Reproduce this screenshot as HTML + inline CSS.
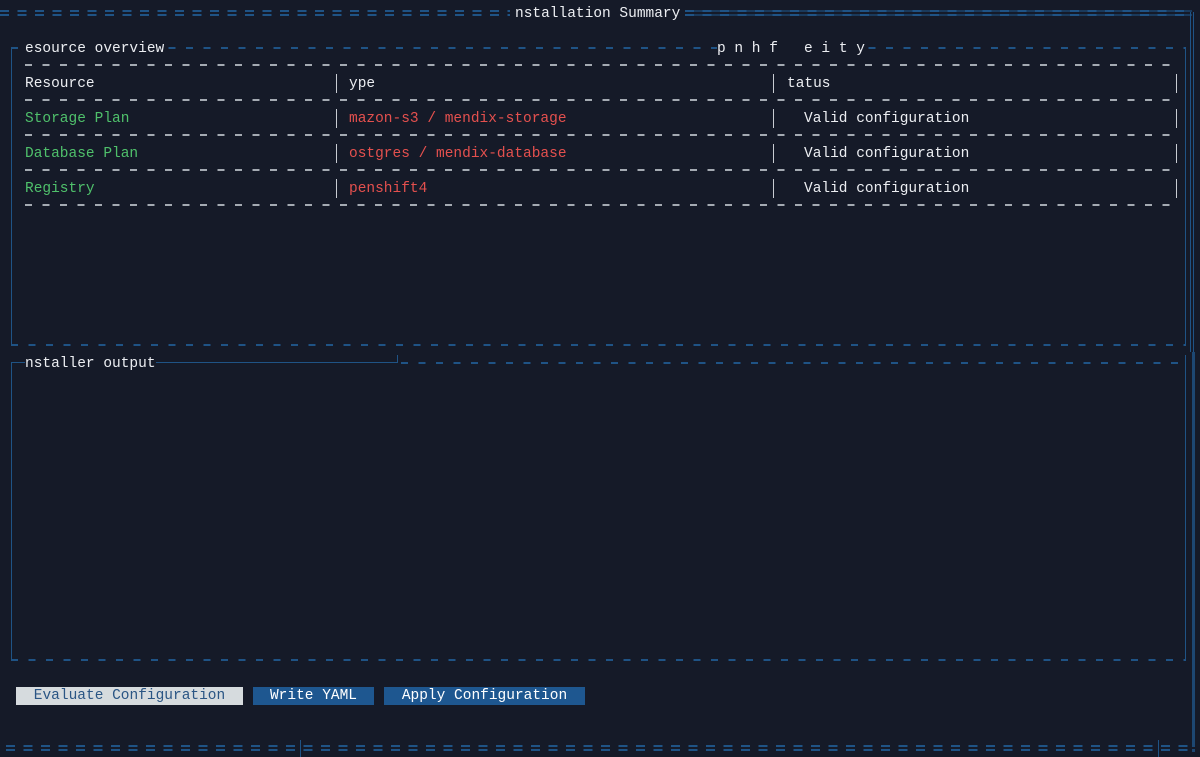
<!DOCTYPE html>
<html><head><meta charset="utf-8"><style>
html,body{margin:0;padding:0;background:#151a28;width:1200px;height:757px;overflow:hidden;position:relative;font-family:"Liberation Mono",monospace;font-size:14.5px;color:#eceef2}
.a{position:absolute}
.t{position:absolute;white-space:pre;line-height:18px;background:#151a28;margin-top:1px}
.hd{height:2px;background:repeating-linear-gradient(90deg,#1f5385 0 7px,transparent 7px 17.5px)}
.gd{height:2px;background:repeating-linear-gradient(90deg,#a4aab2 0 7px,transparent 7px 17.5px)}
.dd{height:6px;background:repeating-linear-gradient(90deg,#1f5385 0 9px,transparent 9px 17.5px);}
.dd::after{content:"";position:absolute;left:0;right:0;top:2px;height:2px;background:#151a28}
.vl{width:1px;background:#1f5385}
.gb{width:1px;background:#c8ccd2}
.g{color:#4fc06b}.r{color:#e4504e}
.btn{position:absolute;top:687px;height:18px;line-height:19px;text-align:center;color:#fff;background:#1e5790}
</style></head><body>
<div class="a dd" style="left:0;top:10px;width:510px"></div>
<div class="t" style="left:515px;top:4px">nstallation Summary</div>
<div class="a" style="left:685px;top:10px;width:507px;height:6px;background:repeating-linear-gradient(90deg,#1f5385 0 9px,#1a3a5c 9px 17.5px)"></div>
<div class="a" style="left:685px;top:12px;width:507px;height:2px;background:#151a28"></div>
<div class="a vl" style="left:1190px;top:12px;height:340px"></div>
<div class="a vl" style="left:1193px;top:12px;height:340px"></div>
<div class="a vl" style="left:1192px;top:352px;height:400px;width:3px;opacity:.8"></div>
<div class="a hd" style="left:11px;top:47px;width:1174px"></div>
<div class="a vl" style="left:11px;top:47px;height:298px"></div>
<div class="a vl" style="left:1185px;top:47px;height:298px"></div>
<div class="a hd" style="left:11px;top:344px;width:1175px"></div>
<div class="t" style="left:25px;top:39px">esource overview</div>
<div class="t" style="left:717px;top:39px">p n h f   e i t y</div>
<div class="a gd" style="left:25px;top:64px;width:1150px"></div>
<div class="a gd" style="left:25px;top:99px;width:1150px"></div>
<div class="a gd" style="left:25px;top:134px;width:1150px"></div>
<div class="a gd" style="left:25px;top:169px;width:1150px"></div>
<div class="a gd" style="left:25px;top:204px;width:1150px"></div>
<div class="a gb" style="left:336px;top:74px;height:19px"></div><div class="a gb" style="left:773px;top:74px;height:19px"></div><div class="a gb" style="left:1176px;top:74px;height:19px"></div>
<div class="a gb" style="left:336px;top:109px;height:19px"></div><div class="a gb" style="left:773px;top:109px;height:19px"></div><div class="a gb" style="left:1176px;top:109px;height:19px"></div>
<div class="a gb" style="left:336px;top:144px;height:19px"></div><div class="a gb" style="left:773px;top:144px;height:19px"></div><div class="a gb" style="left:1176px;top:144px;height:19px"></div>
<div class="a gb" style="left:336px;top:179px;height:19px"></div><div class="a gb" style="left:773px;top:179px;height:19px"></div><div class="a gb" style="left:1176px;top:179px;height:19px"></div>
<div class="t" style="left:25px;top:74px">Resource</div><div class="t" style="left:349px;top:74px">ype</div><div class="t" style="left:787px;top:74px">tatus</div>
<div class="t g" style="left:25px;top:109px">Storage Plan</div><div class="t r" style="left:349px;top:109px">mazon-s3 / mendix-storage</div><div class="t" style="left:804px;top:109px">Valid configuration</div>
<div class="t g" style="left:25px;top:144px">Database Plan</div><div class="t r" style="left:349px;top:144px">ostgres / mendix-database</div><div class="t" style="left:804px;top:144px">Valid configuration</div>
<div class="t g" style="left:25px;top:179px">Registry</div><div class="t r" style="left:349px;top:179px">penshift4</div><div class="t" style="left:804px;top:179px">Valid configuration</div>
<div class="a" style="left:11px;top:362px;width:386px;height:1px;background:#1f5385"></div>
<div class="a vl" style="left:397px;top:355px;height:8px"></div>
<div class="a hd" style="left:401px;top:362px;width:784px"></div>
<div class="a vl" style="left:11px;top:362px;height:298px"></div>
<div class="a vl" style="left:1185px;top:355px;height:305px"></div>
<div class="a hd" style="left:11px;top:659px;width:1175px"></div>
<div class="t" style="left:25px;top:354px">nstaller output</div>
<div class="btn" style="left:16px;width:227px;background:#d6dbde;color:#2a5584">Evaluate Configuration</div>
<div class="btn" style="left:253px;width:121px">Write YAML</div>
<div class="btn" style="left:384px;width:201px">Apply Configuration</div>
<div class="a dd" style="left:6px;top:745px;width:1190px"></div>
<div class="a vl" style="left:300px;top:740px;height:17px"></div>
<div class="a vl" style="left:1158px;top:740px;height:17px"></div>
</body></html>
